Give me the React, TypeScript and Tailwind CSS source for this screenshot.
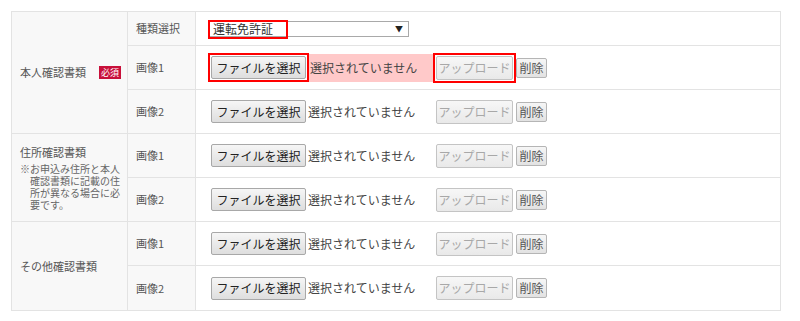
import React from "react";

const font = { fontFamily: '"Noto Sans CJK JP", "Noto Sans", sans-serif' };

function RedBox() {
  return <span className="absolute left-[-3px] top-[-3px] right-[-3px] bottom-[-3px] border-2 border-[#ff0000] pointer-events-none" />;
}

function FileRow({ highlight = false }: { highlight?: boolean }) {
  return (
    <div className="flex items-center">
      <div className="relative">
        <button className="w-[95px] h-[23px] rounded-[2px] border border-[#a8a8a8] bg-gradient-to-b from-[#f6f6f6] to-[#dedede] text-[12px] leading-none text-[#222] flex items-center justify-center">
          ファイルを選択
        </button>
        {highlight && <RedBox />}
      </div>
      <span
        className={
          highlight
            ? "w-[125px] h-[28px] ml-[3px] pl-[1px] flex items-center text-[12px] text-[#444] bg-[#ffc9c9]"
            : "w-[128px] h-[28px] pl-[2px] flex items-center text-[12px] text-[#444]"
        }
      >
        選択されていません
      </span>
      <div className="relative ml-[2px]">
        <button className="w-[77px] h-[24px] rounded-[2px] border border-[#c4c4c4] bg-gradient-to-b from-[#f7f7f7] to-[#e9e9e9] text-[12px] leading-none text-[#a8a8a8] flex items-center justify-center">
          アップロード
        </button>
        {highlight && <RedBox />}
      </div>
      <button className="ml-[3px] w-[31px] h-[20px] rounded-[2px] border border-[#b5b5b5] bg-gradient-to-b from-[#f6f6f6] to-[#e2e2e2] text-[12px] leading-none text-[#555] flex items-center justify-center">
        削除
      </button>
    </div>
  );
}

export default function App() {
  const lab = "border border-[#e3e3e3] bg-[#f8f8f8] text-[11px] text-[#555] align-middle";
  const cont = "border border-[#e3e3e3] bg-white align-middle";
  return (
    <div className="w-[800px] h-[321px] bg-white pt-[11px] pl-[11px]" style={font}>
      <table className="border-collapse table-fixed w-[770px]">
        <colgroup>
          <col className="w-[116px]" />
          <col className="w-[68px]" />
          <col />
        </colgroup>
        <tbody>
          <tr className="h-[34px]">
            <td rowSpan={3} className={lab + " pl-[8px] pr-[6px]"}>
              <div className="flex items-center justify-between">
                <span>本人確認書類</span>
                <span className="bg-[#c8103a] text-white text-[9px] leading-none px-[2px] h-[13px] w-[22px] flex items-center justify-center">
                  必須
                </span>
              </div>
            </td>
            <td className={lab + " pl-[8px]"}>種類選択</td>
            <td className={cont + " pl-[12px]"}>
              <div className="relative w-[201px] h-[16px] border border-[#a9a9a9] bg-white flex items-center justify-between pl-[4px] pr-[5px]">
                <span className="text-[12px] leading-none text-[#333]">運転免許証</span>
                <span className="text-[8px] leading-none text-[#222]">▼</span>
                <div className="absolute left-[-1px] top-[-2px] w-[80px] h-[19px] border-2 border-[#ff0000]" />
              </div>
            </td>
          </tr>
          <tr className="h-[44px]">
            <td className={lab + " pl-[8px]"}>画像1</td>
            <td className={cont + " pl-[15px]"}>
              <FileRow highlight />
            </td>
          </tr>
          <tr className="h-[44px]">
            <td className={lab + " pl-[8px]"}>画像2</td>
            <td className={cont + " pl-[15px]"}>
              <FileRow />
            </td>
          </tr>
          <tr className="h-[44px]">
            <td rowSpan={2} className={lab + " pl-[8px] pr-[4px]"}>
              <div>住所確認書類</div>
              <div className="mt-[3px] flex text-[10px] leading-[12px] text-[#666]">
                <span className="w-[10px] shrink-0">※</span>
                <div className="flex flex-col">
                  <span>お申込み住所と本人</span>
                  <span>確認書類に記載の住</span>
                  <span>所が異なる場合に必</span>
                  <span>要です。</span>
                </div>
              </div>
            </td>
            <td className={lab + " pl-[8px]"}>画像1</td>
            <td className={cont + " pl-[15px]"}>
              <FileRow />
            </td>
          </tr>
          <tr className="h-[44px]">
            <td className={lab + " pl-[8px]"}>画像2</td>
            <td className={cont + " pl-[15px]"}>
              <FileRow />
            </td>
          </tr>
          <tr className="h-[44px]">
            <td rowSpan={2} className={lab + " pl-[8px]"}>
              その他確認書類
            </td>
            <td className={lab + " pl-[8px]"}>画像1</td>
            <td className={cont + " pl-[15px]"}>
              <FileRow />
            </td>
          </tr>
          <tr className="h-[45px]">
            <td className={lab + " pl-[8px]"}>画像2</td>
            <td className={cont + " pl-[15px]"}>
              <FileRow />
            </td>
          </tr>
        </tbody>
      </table>
    </div>
  );
}
